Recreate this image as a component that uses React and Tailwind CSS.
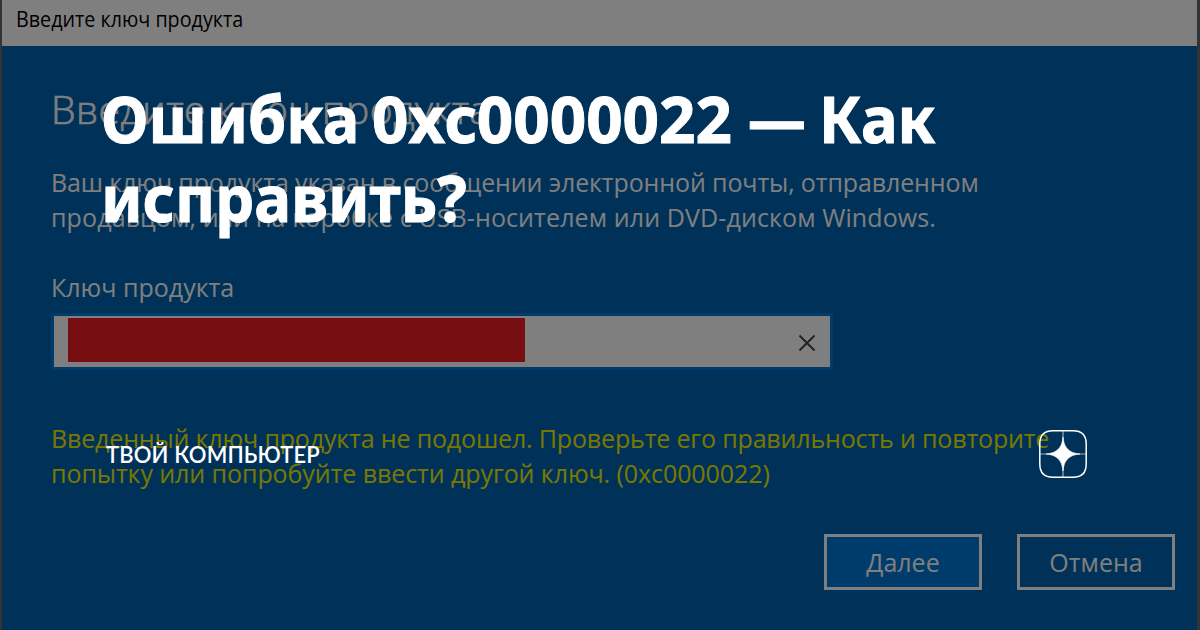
import React from 'react';

const ZenLogo = () => (
  <svg className="w-12 h-12 shrink-0" viewBox="0 0 48 48" fill="none">
    <path
      d="M14 0.800H34C43 0.800 47.200 5 47.200 14V34C47.200 43 43 47.200 34 47.200H14C5 47.200 0.800 43 0.800 34V14C0.800 5 5 0.800 14 0.800Z"
      stroke="#fff"
      strokeWidth="1.500"
    />
    <path d="M24 1v46M1 24h46" stroke="#fff" strokeOpacity="0.600" strokeWidth="1.200" />
    <path
      d="M24 7C25 18 30 23 41 24C30 25 25 30 24 41C23 30 18 25 7 24C18 23 23 18 24 7Z"
      fill="#fff"
      stroke="#fff"
      strokeWidth="0.600"
    />
  </svg>
);

const KeyField = () => (
  <div className="w-[782px] h-[57px] mt-2 bg-white border-[3px] border-[#0078d7] flex items-center justify-between">
    <div className="w-[457px] h-[44px] ml-[14px] -mt-[3px] bg-[#ed1c24]" />
    <svg className="w-4 h-4 mr-[15px] mt-[3px]" viewBox="0 0 16 16">
      <path d="M0.500 0.500l15 15M15.500 0.500l-15 15" stroke="#444" strokeWidth="2" />
    </svg>
  </div>
);

const ProductKeyDialog = () => (
  <div className="w-full h-full flex flex-col bg-[#0063b1] border-l-2 border-r-[3px] border-[#666] text-white">
    <div className="h-[46px] shrink-0 bg-white px-[14px] text-black">
      <span className="block origin-left scale-x-[0.939] leading-[38px] text-[21px] whitespace-nowrap">
        Введите ключ продукта
      </span>
    </div>

    <div className="flex-1 pl-[49px] whitespace-nowrap">
      <div className="mt-[36px] h-[54px] leading-[54px] text-[39px] font-light tracking-[0.5px] [-webkit-text-stroke:0.6px_white]">
        Введите ключ продукта
      </div>
      <div className="mt-[29px] text-[25px] leading-[35px]">
        <div className="tracking-[-0.12px]">Ваш ключ продукта указан в сообщении электронной почты, отправленном</div>
        <div className="tracking-[0.11px]">продавцом, или на коробке с USB-носителем или DVD-диском Windows.</div>
      </div>
      <div className="mt-[35px] text-[25px] leading-[35px]">Ключ продукта</div>
      <KeyField />
      <div className="mt-[51px] text-[25px] leading-[35px] text-[#f0f000]">
        <div className="tracking-[-0.16px]">Введенный ключ продукта не подошел. Проверьте его правильность и повторите</div>
        <div className="tracking-[-0.08px]">попытку или попробуйте ввести другой ключ. (0xc0000022)</div>
      </div>
      <div className="mt-[43px] pr-[22px] flex justify-end gap-[35px] text-[25px]">
        <button className="w-[158px] h-[56px] pt-[2px] border-[3px] border-white bg-[#0078d7]">Далее</button>
        <button className="w-[158px] h-[56px] pt-[2px] border-[3px] border-white">Отмена</button>
      </div>
    </div>
  </div>
);

const App = () => {
  return (
    <div className="relative w-[1200px] h-[630px] overflow-hidden font-['Open_Sans',sans-serif]">
      <ProductKeyDialog />
      <div className="absolute inset-0 bg-black/50 text-white flex flex-col">
        <h1 className="mt-[79px] ml-[101px] text-[65px] leading-[79px] font-bold font-['Noto_Sans',sans-serif] whitespace-nowrap [-webkit-text-stroke:1px_white]">
          <div className="flex">
            <span className="w-[271px] origin-left scale-x-[0.941]">Ошибка</span>
            <span className="w-[376px] origin-left scale-x-[0.980]">0xc0000022</span>
            <span className="w-[71px] origin-left scale-x-[0.890]">—</span>
            <span className="origin-left scale-x-[0.945]">Как</span>
          </div>
          <div className="origin-left scale-x-[0.950]">исправить?</div>
        </h1>
        <div className="mt-[193px] ml-[106px] mr-[113px] flex items-center justify-between">
          <span className="text-[22px] font-semibold tracking-[0.15px] font-['Lato',sans-serif]">ТВОЙ КОМПЬЮТЕР</span>
          <ZenLogo />
        </div>
      </div>
    </div>
  );
};

export default App;
